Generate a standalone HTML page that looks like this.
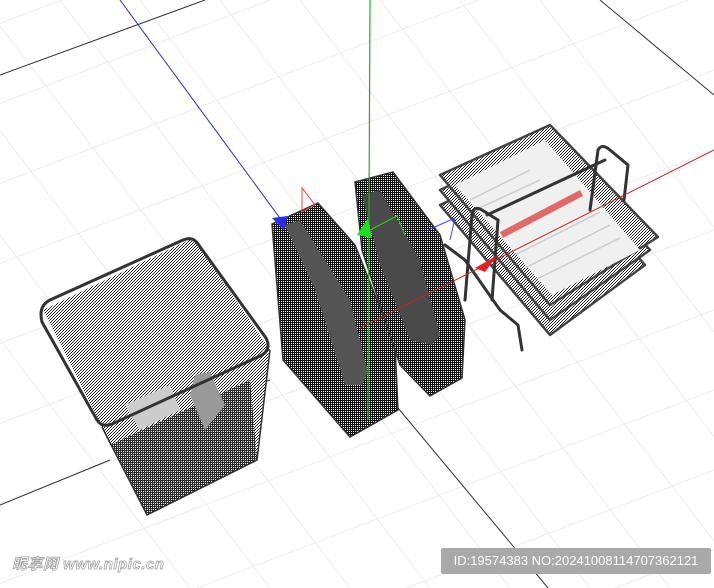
<!DOCTYPE html>
<html><head><meta charset="utf-8"><style>
html,body{margin:0;padding:0;background:#fff;width:714px;height:588px;overflow:hidden}
.w{position:relative;width:714px;height:588px;overflow:hidden;background:#fff}
svg{position:absolute;left:0;top:0}
.wm{position:absolute;left:12px;top:553px;font:italic bold 15px "Liberation Sans","Noto Sans CJK SC",sans-serif;color:#fff;-webkit-text-stroke:0.7px #999;letter-spacing:0.5px;white-space:nowrap}
.id{position:absolute;left:441px;top:548px;width:270px;height:26px;background:#a9a9a9;border-radius:2px;color:#fff;font:13px "Liberation Sans",sans-serif;line-height:26px;text-align:center;white-space:nowrap}
</style></head><body><div class="w">
<svg width="714" height="588" viewBox="0 0 714 588">
<defs>
<pattern id="m" width="3" height="3" patternUnits="userSpaceOnUse"><rect width="3" height="3" fill="#fff"/><rect width="1" height="1" fill="#111"/><rect x="2" y="1" width="1" height="1" fill="#111"/><rect x="1" y="2" width="1" height="1" fill="#333"/></pattern>
<pattern id="d" width="2" height="2" patternUnits="userSpaceOnUse"><rect width="2" height="2" fill="#fff"/><rect width="2" height="1" fill="#111"/><rect width="1" height="2" fill="#111"/></pattern>
</defs>
<g stroke="#ececec" stroke-width="1">
<line x1="-200" y1="100" x2="714" y2="-250"/><line x1="-200" y1="180" x2="714" y2="-170"/><line x1="-200" y1="260" x2="714" y2="-90"/><line x1="-200" y1="340" x2="714" y2="-10"/><line x1="-200" y1="420" x2="714" y2="70"/><line x1="-200" y1="500" x2="714" y2="150"/><line x1="-200" y1="580" x2="714" y2="230"/><line x1="-200" y1="660" x2="714" y2="310"/><line x1="-200" y1="740" x2="714" y2="390"/><line x1="-200" y1="820" x2="714" y2="470"/><line x1="-200" y1="900" x2="714" y2="550"/><line x1="-200" y1="980" x2="714" y2="630"/>
<line x1="-100" y1="0" x2="350" y2="588"/><line x1="-20" y1="0" x2="430" y2="588"/><line x1="60" y1="0" x2="510" y2="588"/><line x1="140" y1="0" x2="590" y2="588"/><line x1="220" y1="0" x2="670" y2="588"/><line x1="300" y1="0" x2="750" y2="588"/><line x1="380" y1="0" x2="830" y2="588"/><line x1="460" y1="0" x2="910" y2="588"/><line x1="540" y1="0" x2="990" y2="588"/><line x1="-180" y1="0" x2="270" y2="588"/><line x1="-260" y1="0" x2="190" y2="588"/>
</g>
<g stroke="#333" stroke-width="1">
<line x1="0" y1="75" x2="205" y2="0"/><line x1="600" y1="0" x2="714" y2="95"/>
<line x1="0" y1="505" x2="110" y2="460"/><line x1="230" y1="395" x2="270" y2="380"/>
<line x1="398" y1="408" x2="548" y2="588"/>
</g>
<line x1="120" y1="0" x2="285" y2="225" stroke="#2a2ad0" stroke-width="1"/>
<!-- wastebasket -->
<path d="M43,310 L193,238 L270,350 L257,460 L147,515 L102,427 Z" fill="url(#m)"/>
<path d="M102,427 L110,445 L250,380 L257,460 L147,515 Z" fill="url(#d)" opacity=".85"/>
<path d="M195,375 L210,372 L225,405 L205,430 L190,395 Z" fill="#999"/>
<path d="M125,405 L170,385 L180,410 L140,430 Z" fill="#ccc"/>
<path d="M50,300 L183,240 Q193,236 198,244 L266,338 Q272,350 260,356 L112,424 Q102,428 97,420 L42,322 Q38,306 50,300 Z" fill="none" stroke="#333" stroke-width="3" stroke-linejoin="round"/>
<path d="M102,427 L147,515 L257,460 L270,350" fill="none" stroke="#333" stroke-width="1.5"/>
<!-- file 1 -->
<path d="M272,224 L318,203 L355,245 L395,345 L398,410 L350,437 L283,360 Z" fill="url(#d)"/>
<path d="M285,225 L300,220 L350,300 L368,372 L362,385 L345,385 L315,290 Z" fill="#555"/>
<path d="M272,224 L318,203 L355,245 L395,345 L398,410 L350,437 L283,360 Z" fill="none" stroke="#333" stroke-width="1.5"/>
<!-- file 2 -->
<path d="M355,182 L393,172 L440,235 L465,320 L462,378 L430,396 L400,365 L362,250 Z" fill="url(#d)"/>
<path d="M362,195 L380,190 L420,260 L440,335 L432,345 L410,340 L380,265 Z" fill="#4a4a4a"/>
<path d="M355,182 L393,172 L440,235 L465,320 L462,378 L430,396 L400,365 L362,250 Z" fill="none" stroke="#333" stroke-width="1.5"/>
<!-- tray stack -->
<g fill="url(#m)" stroke="#444" stroke-width="2.5" stroke-linejoin="round">
<path d="M440,205 L548,155 L645,265 L550,335 Z"/>
<path d="M440,190 L548,140 L650,250 L550,320 Z"/>
<path d="M440,175 L550,125 L658,237 L550,305 Z"/>
</g>
<path d="M455,185 L545,140 L640,250 L552,295 Z" fill="#f0f0f0"/>
<path d="M500,232 L580,190 L583,196 L503,238 Z" fill="#e06a6a"/>
<g stroke="#ccc" stroke-width="1.5"><line x1="470" y1="200" x2="530" y2="170"/><line x1="475" y1="210" x2="540" y2="180"/><line x1="515" y1="255" x2="600" y2="212"/><line x1="525" y1="268" x2="610" y2="225"/><line x1="535" y1="280" x2="620" y2="238"/></g>
<g fill="none" stroke="#333" stroke-width="3" stroke-linecap="round">
<path d="M465,300 L472,215 Q474,205 482,210 L498,220 L492,300"/>
<path d="M590,210 L598,150 Q602,143 610,150 L628,165 L624,200"/>
<line x1="487" y1="215" x2="605" y2="160"/>
<path d="M445,245 L465,260 L500,310 L518,325 L522,350"/>
</g>
<!-- axes -->
<line x1="370" y1="0" x2="368" y2="420" stroke="#1fae1f" stroke-width="1.2"/>
<line x1="360" y1="328" x2="714" y2="150" stroke="#d02020" stroke-width="1"/>
<path d="M272,218 L288,216 L284,230 Z" fill="#2a2af0"/>
<path d="M357,235 L368,218 L372,238 Z" fill="#22dd22"/>
<path d="M475,268 L498,255 L485,272 Z" fill="#e62020"/>
<path d="M302,188 L302,212 L315,205 Z" fill="none" stroke="#e44" stroke-width="1"/>
<path d="M370,230 L397,216 L405,235" fill="none" stroke="#2c2" stroke-width="1.2"/>
<path d="M428,230 L455,218 L450,240" fill="none" stroke="#44f" stroke-width="1"/>
</svg>
<div class="wm">昵享网 www.nipic.cn</div>
<div class="id">ID:19574383 NO:20241008114707362121</div>
</div></body></html>
